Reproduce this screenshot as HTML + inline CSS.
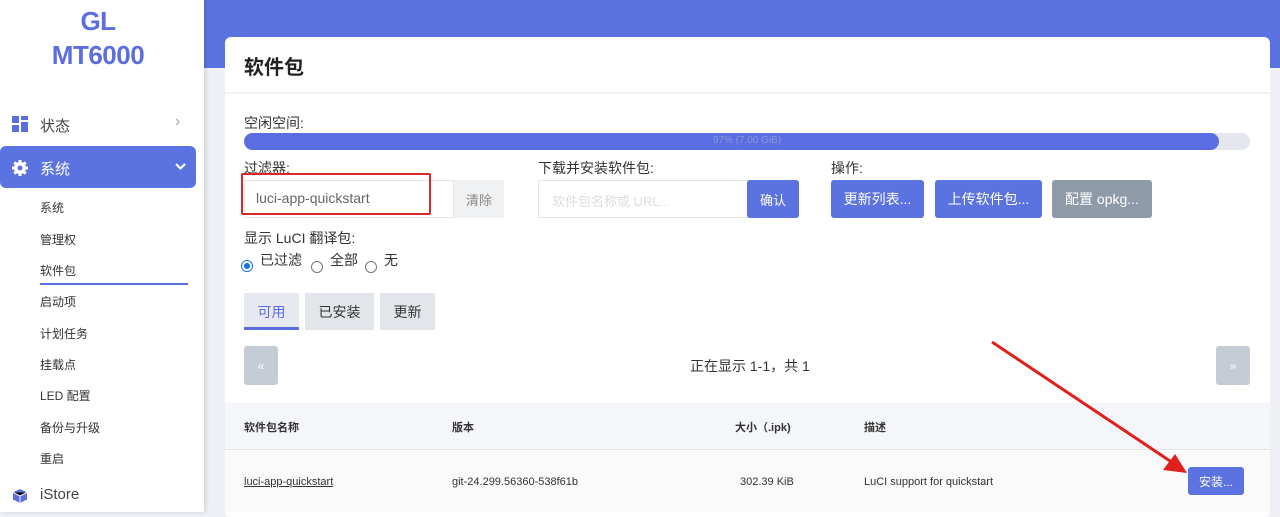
<!DOCTYPE html>
<html><head><meta charset="utf-8"><style>
*{margin:0;padding:0;box-sizing:border-box}
body{width:1280px;height:512px;overflow:hidden;background:#eef0f5;font-family:"Liberation Sans","Noto Sans CJK SC",sans-serif;color:#333;position:relative}
.a{position:absolute}
.blue{background:#5b73e0}
.btn{position:absolute;border-radius:3px;color:#fff;font-size:14px;display:flex;align-items:center;justify-content:center}
.rad{position:absolute;width:12px;height:12px;border:1px solid #777;border-radius:50%}
.sm{position:absolute;left:40px;font-size:12px;color:#333}
</style></head><body>
<div class="a blue" style="left:204px;top:0;width:1076px;height:68px"></div>
<div class="a" style="left:0;top:0;width:204px;height:512px;background:#fff;box-shadow:2px 0 4px rgba(0,0,0,.12)"></div>
<div class="a" style="left:0;top:4px;width:196px;text-align:center;font-weight:900;color:#5b6ee1;font-size:26px;line-height:34px;letter-spacing:-0.5px">GL<br>MT6000</div>
<svg class="a" style="left:12px;top:116px" width="16" height="16"><rect x="0" y="0" width="7" height="7" fill="#5b6ee1"/><rect x="9" y="0" width="7" height="4" fill="#5b6ee1"/><rect x="9" y="6" width="7" height="10" fill="#5b6ee1"/><rect x="0" y="9" width="7" height="7" fill="#5b6ee1"/></svg>
<div class="a" style="left:40px;top:115px;font-size:15px;color:#444">状态</div>
<div class="a" style="left:175px;top:113px;font-size:16px;color:#aaa">›</div>
<div class="a blue" style="left:0;top:146px;width:196px;height:42px;border-radius:6px"></div>
<svg class="a" style="left:11px;top:159px" width="18" height="18" viewBox="0 0 18 18"><g fill="#fff"><circle cx="9" cy="9" r="6"/><rect x="7.5" y="1" width="3" height="16"/><rect x="1" y="7.5" width="16" height="3"/><rect x="7.5" y="1" width="3" height="16" transform="rotate(45 9 9)"/><rect x="7.5" y="1" width="3" height="16" transform="rotate(-45 9 9)"/></g><circle cx="9" cy="9" r="2.5" fill="#5b73e0"/></svg>
<div class="a" style="left:40px;top:158px;font-size:15px;color:#fff">系统</div>
<svg class="a" style="left:175px;top:163px" width="11" height="8"><path d="M1 1L5.5 5.5L10 1" stroke="#fff" stroke-width="2.2" fill="none"/></svg>
<div class="sm" style="top:199px">系统</div>
<div class="sm" style="top:231px">管理权</div>
<div class="sm" style="top:262px">软件包</div>
<div class="a" style="left:40px;top:283px;width:148px;height:2px;background:#5b6ee1"></div>
<div class="sm" style="top:293px">启动项</div>
<div class="sm" style="top:325px">计划任务</div>
<div class="sm" style="top:356px">挂载点</div>
<div class="sm" style="top:387px">LED 配置</div>
<div class="sm" style="top:419px">备份与升级</div>
<div class="sm" style="top:450px">重启</div>
<svg class="a" style="left:12px;top:488px" width="16" height="16"><path d="M8 1L15 4.5V11.5L8 15L1 11.5V4.5Z" fill="#5b6ee1"/><path d="M1 4.5L8 8L15 4.5M8 8V15" stroke="#fff" stroke-width="1"/></svg>
<div class="a" style="left:40px;top:486px;font-size:15px;color:#444">iStore</div>

<div class="a" style="left:225px;top:37px;width:1045px;height:480px;background:#fff;border-radius:6px"></div>
<div class="a" style="left:225px;top:92px;width:1045px;height:2px;background:#f2f3f6"></div>
<div class="a" style="left:244px;top:51px;font-size:20px;font-weight:bold;color:#222">软件包</div>
<div class="a" style="left:244px;top:113px;font-size:14px">空闲空间:</div>
<div class="a" style="left:244px;top:133px;width:1006px;height:17px;background:#e4e7ed;border-radius:9px"></div>
<div class="a" style="left:244px;top:133px;width:975px;height:17px;background:#5b6ee1;border-radius:9px"></div>
<div class="a" style="left:244px;top:135px;width:1006px;text-align:center;font-size:10px;color:#8c98d8">97% (7.00 GiB)</div>
<div class="a" style="left:244px;top:158px;font-size:14px">过滤器:</div>
<div class="a" style="left:244px;top:180px;width:210px;height:38px;border:1px solid #e5e5e5"></div>
<div class="a" style="left:241px;top:173px;width:190px;height:42px;border:2px solid #d9282b;border-radius:2px"></div>
<div class="a" style="left:256px;top:190px;font-size:14px;color:#666">luci-app-quickstart</div>
<div class="a" style="left:454px;top:180px;width:50px;height:38px;background:#f0f1f3;font-size:13px;color:#888;display:flex;align-items:center;justify-content:center">清除</div>
<div class="a" style="left:538px;top:158px;font-size:14px">下载并安装软件包:</div>
<div class="a" style="left:538px;top:180px;width:210px;height:38px;border:1px solid #e5e5e5"></div>
<div class="a" style="left:552px;top:191px;font-size:13px;color:#ddd">软件包名称或 URL...</div>
<div class="btn blue" style="left:747px;top:180px;width:52px;height:38px;font-size:13px">确认</div>
<div class="a" style="left:831px;top:158px;font-size:14px">操作:</div>
<div class="btn blue" style="left:831px;top:180px;width:93px;height:38px">更新列表...</div>
<div class="btn blue" style="left:935px;top:180px;width:107px;height:38px">上传软件包...</div>
<div class="btn" style="left:1052px;top:180px;width:100px;height:38px;background:#8f9aa8">配置 opkg...</div>
<div class="a" style="left:244px;top:228px;font-size:14px">显示 LuCI 翻译包:</div>
<div class="rad" style="left:241px;top:260px;border-color:#1a73e8;background:radial-gradient(#1a73e8 40%,#fff 45%)"></div>
<div class="a" style="left:260px;top:250px;font-size:14px">已过滤</div>
<div class="rad" style="left:311px;top:261px"></div>
<div class="a" style="left:330px;top:250px;font-size:14px">全部</div>
<div class="rad" style="left:365px;top:261px"></div>
<div class="a" style="left:384px;top:250px;font-size:14px">无</div>
<div class="a" style="left:244px;top:293px;width:55px;height:37px;background:#e6e9ef;font-size:14px;color:#5b6ee1;display:flex;align-items:center;justify-content:center">可用</div>
<div class="a" style="left:244px;top:327px;width:55px;height:3px;background:#5b6ee1"></div>
<div class="a" style="left:305px;top:293px;width:69px;height:37px;background:#e2e5ea;font-size:14px;display:flex;align-items:center;justify-content:center">已安装</div>
<div class="a" style="left:380px;top:293px;width:55px;height:37px;background:#e2e5ea;font-size:14px;display:flex;align-items:center;justify-content:center">更新</div>
<div class="btn" style="left:244px;top:346px;width:34px;height:39px;background:#c5ccd6;font-size:12px">«</div>
<div class="btn" style="left:1216px;top:346px;width:34px;height:39px;background:#c5ccd6;font-size:12px">»</div>
<div class="a" style="left:690px;top:356px;font-size:14px">正在显示 1-1，共 1</div>
<div class="a" style="left:225px;top:403px;width:1045px;height:47px;background:#f4f6f9;border-bottom:1px solid #e3e5e8"></div>
<div class="a" style="left:244px;top:419px;font-size:11px;font-weight:bold">软件包名称</div>
<div class="a" style="left:452px;top:419px;font-size:11px;font-weight:bold">版本</div>
<div class="a" style="left:735px;top:419px;font-size:11px;font-weight:bold">大小（.ipk)</div>
<div class="a" style="left:864px;top:419px;font-size:11px;font-weight:bold">描述</div>
<div class="a" style="left:225px;top:451px;width:1045px;height:61px;background:#fafafa"></div>
<div class="a" style="left:244px;top:476px;font-size:11px;text-decoration:underline">luci-app-quickstart</div>
<div class="a" style="left:452px;top:476px;font-size:11px">git-24.299.56360-538f61b</div>
<div class="a" style="left:740px;top:476px;font-size:11px">302.39 KiB</div>
<div class="a" style="left:864px;top:476px;font-size:11px">LuCI support for quickstart</div>
<div class="btn blue" style="left:1188px;top:467px;width:56px;height:28px;font-size:12px">安装...</div>
<svg class="a" style="left:980px;top:330px" width="220" height="160"><line x1="12" y1="12" x2="193" y2="133" stroke="#e0201c" stroke-width="3"/><path d="M207 143L183 140L195 124Z" fill="#e0201c"/></svg>
</body></html>
